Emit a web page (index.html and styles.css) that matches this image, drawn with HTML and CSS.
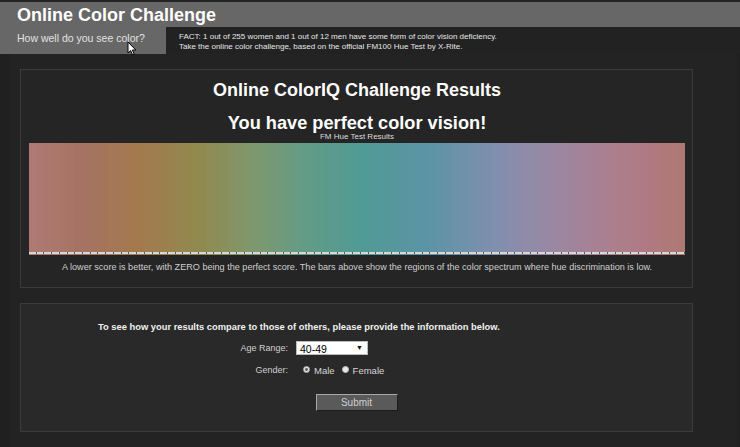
FILE: index.html
```html
<!DOCTYPE html>
<html lang="en">
<head>
  <meta charset="UTF-8" />
  <meta name="viewport" content="width=device-width, initial-scale=1" />
  <title>Online Color Challenge</title>
  <link rel="stylesheet" href="styles.css">
</head>
<body>
  <header class="top">
    <div class="title-bar">
      <h1>Online Color Challenge</h1>
    </div>
    <div class="sub-bar">
      <div class="tagline">How well do you see color?</div>
      <div class="fact">
        FACT: 1 out of 255 women and 1 out of 12 men have some form of color vision deficiency.<br>
        Take the online color challenge, based on the official FM100 Hue Test by X-Rite.
      </div>
    </div>
  </header>

  <main class="page">
    <section class="panel results">
      <h2 class="results-title">Online ColorIQ Challenge Results</h2>
      <h3 class="verdict">You have perfect color vision!</h3>
      <div class="chart-label">FM Hue Test Results</div>
      <div class="spectrum" id="spectrum"></div>
      <p class="caption">A lower score is better, with ZERO being the perfect score. The bars above show the regions of the color spectrum where hue discrimination is low.</p>
    </section>

    <section class="panel compare">
      <p class="intro">To see how your results compare to those of others, please provide the information below.</p>
      <form class="compare-form">
        <div class="form-row age-row">
          <label for="age">Age Range:</label>
          <span class="select-wrap">
            <select id="age">
              <option>Under 20</option>
              <option>20-29</option>
              <option>30-39</option>
              <option selected>40-49</option>
              <option>50-59</option>
              <option>60+</option>
            </select>
          </span>
        </div>
        <div class="form-row gender-row">
          <label>Gender:</label>
          <span class="radios">
            <label class="radio"><input type="radio" name="gender" checked> Male</label>
            <label class="radio"><input type="radio" name="gender"> Female</label>
          </span>
        </div>
        <div class="submit-row">
          <button type="button" class="submit-button">Submit</button>
        </div>
      </form>
    </section>
  </main>

  <svg class="cursor" width="10" height="15" viewBox="0 0 10 15">
    <path d="M1 1 L1 12 L3.6 9.6 L5.6 13.8 L7.2 13 L5.3 9 L8.8 9 Z" fill="#fff" stroke="#000" stroke-width="1" stroke-linejoin="round"/>
  </svg>

  <script>
    // 85 caps of the FM100 hue test, colours roughly read from the test
    const stops = [
      [0.00, 176, 122, 116],
      [0.08, 166, 114, 98],
      [0.17, 163, 122, 78],
      [0.26, 144, 138, 78],
      [0.34, 127, 152, 110],
      [0.43, 96, 156, 136],
      [0.51, 80, 154, 150],
      [0.61, 92, 148, 166],
      [0.71, 128, 143, 174],
      [0.79, 152, 136, 164],
      [0.88, 170, 128, 144],
      [0.95, 176, 121, 128],
      [1.00, 174, 121, 114]
    ];

    function colorAt(t) {
      for (let i = 0; i < stops.length - 1; i++) {
        const a = stops[i], b = stops[i + 1];
        if (t <= b[0]) {
          const k = (t - a[0]) / (b[0] - a[0]);
          const c = [1, 2, 3].map(j => Math.round(a[j] + (b[j] - a[j]) * k));
          return 'rgb(' + c.join(',') + ')';
        }
      }
      return 'rgb(174,121,114)';
    }

    const spectrum = document.getElementById('spectrum');
    const caps = 85;
    for (let i = 0; i < caps; i++) {
      const cap = document.createElement('div');
      cap.className = 'cap';
      cap.style.background = colorAt((i + 0.5) / caps);
      const score = document.createElement('div');
      score.className = 'score';
      cap.appendChild(score);
      spectrum.appendChild(cap);
    }
  </script>
</body>
</html>
```

FILE: styles.css
```css
body {
  margin: 0;
  background: #202020;
  font-family: "Liberation Sans", Arial, sans-serif;
  color: #ddd;
}

/* cabecalho */
.top {
  padding-top: 2px;
  background: #222;
}

.title-bar {
  background: #676767;
  height: 25px;
  padding-left: 17px;
}

.title-bar h1 {
  margin: 0;
  font-size: 18px;
  line-height: 26px;
  color: #fff;
}

.sub-bar {
  display: flex;
  height: 27px;
}

.tagline {
  width: 149px;
  padding-left: 17px;
  background: #676767;
  font-size: 10.5px;
  line-height: 22px;
  color: #e2e2e2;
}

.fact {
  padding: 5px 0 0 13px;
  font-size: 8px;
  line-height: 10px;
  color: #e6e6e6;
}

.page {
  background: #232323;
  margin: 0 3px 0 10px;
  padding: 15px 44px 16px 10px;
}

.panel {
  border: 1px solid #3b3b3b;
  box-sizing: border-box;
  width: 673px;
}

/* resultados */
.results {
  background: #252525;
  padding: 9px 7px 13px 8px;
  text-align: center;
  height: 219px;
}

.results-title {
  margin: 0;
  font-size: 18px;
  line-height: 22px;
  color: #fff;
}

.verdict {
  margin: 12px 0 0;
  font-size: 18.2px;
  line-height: 20px;
  color: #fff;
}

.chart-label {
  font-size: 8px;
  line-height: 8px;
  color: #ddd;
}

.spectrum {
  display: flex;
  height: 112px;
  margin-top: 2px;
}

.cap {
  flex: 1;
  display: flex;
  flex-direction: column;
  justify-content: flex-end;
}

.score {
  height: 2px;
  margin-bottom: 1px;
  background: #d8d8d8;
  border-right: 1.5px solid #5a5a5a;
}

.caption {
  margin: 6px 0 0;
  font-size: 9.1px;
  line-height: 12px;
  color: #cfcfcf;
}

/* formulario */
.compare {
  background: #292929;
  margin-top: 15px;
  padding: 17px 0 0;
  height: 129px;
}

.intro {
  margin: 0 0 0 77px;
  font-size: 9.35px;
  font-weight: bold;
  line-height: 12px;
  color: #f0f0f0;
}

.form-row {
  display: grid;
  grid-template-columns: 267px auto;
  column-gap: 8px;
  align-items: center;
  font-size: 9px;
  color: #cfcfcf;
}

.form-row > label {
  text-align: right;
}

.age-row {
  margin-top: 5px;
  height: 19px;
}

.gender-row {
  margin-top: 4px;
  height: 18px;
}

.select-wrap {
  position: relative;
  width: 72px;
  height: 14px;
}

.select-wrap select {
  appearance: none;
  width: 72px;
  height: 14px;
  margin: 0;
  padding: 1px 0 0 3px;
  border: 1px solid #bbb;
  border-radius: 0;
  background: #fff;
  color: #000;
  font-family: "Liberation Sans", Arial, sans-serif;
  font-size: 10.5px;
  line-height: 12px;
}

.select-wrap::after {
  content: "\25BC";
  position: absolute;
  right: 5px;
  top: 3px;
  font-size: 7px;
  color: #111;
  pointer-events: none;
}

.radios {
  display: flex;
  gap: 7px;
  padding-left: 7px;
}

.radio {
  display: flex;
  align-items: center;
  gap: 4px;
  font-size: 9.5px;
  color: #d6d6d6;
}

.radio input {
  appearance: none;
  width: 7px;
  height: 7px;
  margin: 0 0 2px;
  border-radius: 50%;
  background: #e8e8e8;
  border: 1px solid #bdbdbd;
}

.radio input:checked {
  background: radial-gradient(circle, #666 0 35%, #e0e0e0 45%);
}

.submit-row {
  display: flex;
  justify-content: center;
  margin-top: 15px;
}

.submit-button {
  width: 82px;
  height: 17px;
  padding: 0;
  background: #5a5a5a;
  border: 1px solid;
  border-color: #a8a8a8 #1c1c1c #1c1c1c #a8a8a8;
  color: #cfcfcf;
  font-family: "Liberation Sans", Arial, sans-serif;
  font-size: 10px;
}

.cursor {
  position: absolute;
  left: 127px;
  top: 41px;
}
```
